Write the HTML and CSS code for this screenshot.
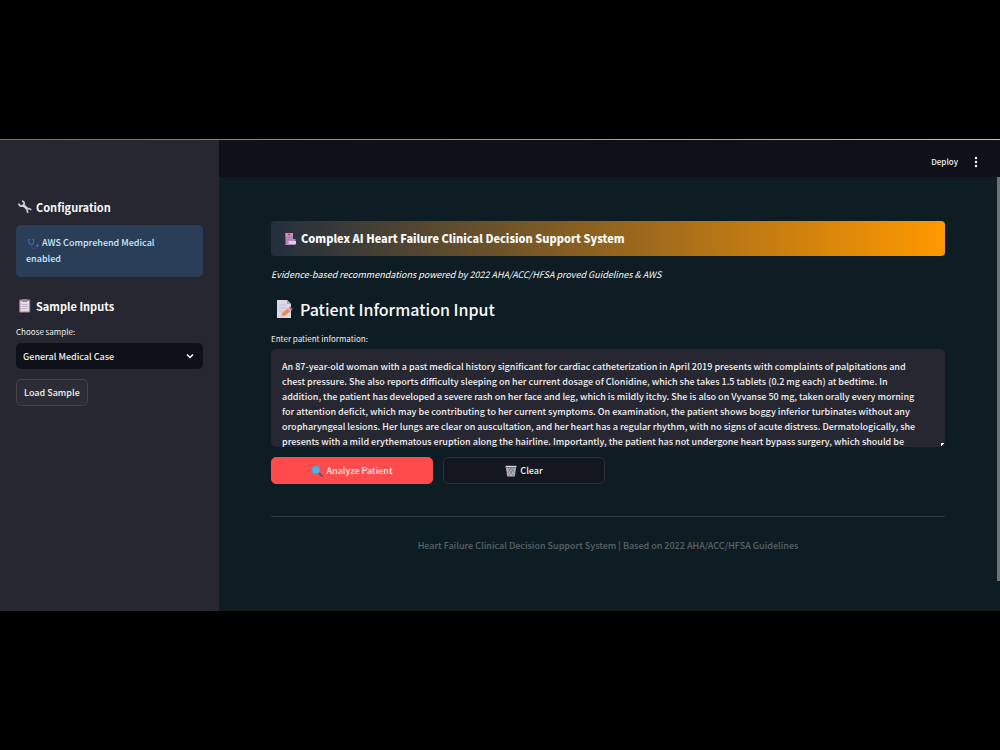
FILE: index.html
```html
<!DOCTYPE html>
<html lang="en">
<head>
    <meta charset="UTF-8">
    <meta name="viewport" content="width=device-width, initial-scale=1.0">
    <title>Heart Failure Clinical Decision Support System</title>
    <link rel="stylesheet" href="styles.css">
</head>
<body>
    <div class="app">
        <aside class="sidebar">
            <h2 class="side-title">
                <svg class="icon" viewBox="0 0 16 16" aria-hidden="true">
                    <path d="M6.500 5.500L12 10.500" stroke="#d0cfdd" stroke-width="2.600"/>
                    <path d="M6 2A2.600 2.600 0 1 1 3 4.600" fill="none" stroke="#d0cfdd" stroke-width="1.700"/>
                    <path d="M15 11.200A2 2 0 1 0 12.400 13.600" fill="none" stroke="#c2c0d0" stroke-width="1.700"/>
                </svg>
                Configuration
            </h2>
            <div class="notice">
                <svg class="icon-small" viewBox="0 0 14 14" aria-hidden="true">
                    <path d="M4 2.500H2.800v2.500a2.400 2.400 0 0 0 4.800 0V2.500H6.500" fill="none" stroke="#4669a8" stroke-width="1.100"/>
                    <path d="M5.200 7.500v2a2.600 2.600 0 0 0 5 0.500" fill="none" stroke="#51398f" stroke-width="1.400"/>
                    <circle cx="11.500" cy="8.500" r="1.200" fill="#5468d6"/>
                </svg>
                AWS Comprehend Medical enabled
            </div>

            <h2 class="side-title">
                <svg class="icon" viewBox="0 0 16 16" aria-hidden="true">
                    <rect x="3.200" y="1.500" width="11" height="13" rx="1" fill="#b9806c"/>
                    <rect x="4.400" y="3" width="8.600" height="10.500" fill="#ded9ec"/>
                    <rect x="6.200" y="1" width="5" height="3" rx="1" fill="#8f88a5"/>
                    <path d="M5.700 6.500h6M5.700 8.500h6M5.700 10.500h5" stroke="#b6aec9" stroke-width="0.800"/>
                </svg>
                Sample Inputs
            </h2>
            <label class="label" for="sample">Choose sample:</label>
            <div class="select-box">
                <select id="sample">
                    <option>General Medical Case</option>
                </select>
                <svg class="chevron" viewBox="0 0 10 10" aria-hidden="true">
                    <path d="M2 3.500L5 6.500L8 3.500" fill="none" stroke="#fafafa" stroke-width="1.500"/>
                </svg>
            </div>
            <button type="button" class="btn btn-load">Load Sample</button>
        </aside>

        <div class="page">
            <header class="toolbar">
                <button type="button" class="tool-btn">Deploy</button>
                <button type="button" class="tool-btn" aria-label="Menu">
                    <svg class="dots" viewBox="0 0 4 12" aria-hidden="true">
                        <circle cx="2" cy="2" r="1.200" fill="#fafafa"/>
                        <circle cx="2" cy="6" r="1.200" fill="#fafafa"/>
                        <circle cx="2" cy="10" r="1.200" fill="#fafafa"/>
                    </svg>
                </button>
            </header>

            <main class="content">
                <h1 class="banner">
                    <svg class="icon-small" viewBox="0 0 14 14" aria-hidden="true">
                        <path d="M1.500 1h7.500v6h2.500v6h-10z" fill="#b58abf"/>
                        <path d="M1.500 1h7.500v3h-7.500z" fill="#d78caf"/>
                        <path d="M5.200 1.300v2.400M4 2.500h2.400" stroke="#d63f72" stroke-width="1"/>
                        <path d="M3 5.500h4.500M3 7.500h3" stroke="#9c7db5" stroke-width="1"/>
                        <path d="M4.500 9h7.500v3h-7.500z" fill="#e0c8f2"/>
                    </svg>
                    Complex AI Heart Failure Clinical Decision Support System
                </h1>
                <p class="tagline">Evidence-based recommendations powered by 2022 AHA/ACC/HFSA proved Guidelines &amp; AWS</p>

                <h2 class="section-title">
                    <svg class="icon-large" viewBox="0 0 20 20" aria-hidden="true">
                        <path d="M1 1h10l4 4v14H1z" fill="#ddd8e8"/>
                        <path d="M11 1v4h4z" fill="#aaa3bb"/>
                        <path d="M3.500 6h7M3.500 9h8M3.500 12h5" stroke="#c6c0d3" stroke-width="0.900"/>
                        <path d="M6.500 16L13 11" stroke="#f08a4b" stroke-width="3.600"/>
                        <path d="M13 11l1.500-1.200" stroke="#c9bccb" stroke-width="3.600"/>
                        <path d="M14.300 10l1.400-1.100" stroke="#dc4c58" stroke-width="3.600"/>
                        <path d="M4.500 18l1-3.500 2.200 2.800z" fill="#efbd91"/>
                    </svg>
                    Patient Information Input
                </h2>
                <label class="label" for="patient">Enter patient information:</label>
                <div class="text-box">
                    <textarea id="patient">An 87-year-old woman with a past medical history significant for cardiac catheterization in April 2019 presents with complaints of palpitations and
chest pressure. She also reports difficulty sleeping on her current dosage of Clonidine, which she takes 1.5 tablets (0.2 mg each) at bedtime. In
addition, the patient has developed a severe rash on her face and leg, which is mildly itchy. She is also on Vyvanse 50 mg, taken orally every morning
for attention deficit, which may be contributing to her current symptoms. On examination, the patient shows boggy inferior turbinates without any
oropharyngeal lesions. Her lungs are clear on auscultation, and her heart has a regular rhythm, with no signs of acute distress. Dermatologically, she
presents with a mild erythematous eruption along the hairline. Importantly, the patient has not undergone heart bypass surgery, which should be</textarea>
                </div>

                <div class="actions">
                    <button type="button" class="btn btn-primary">
                        <svg class="icon-btn" viewBox="0 0 12 12" aria-hidden="true">
                            <path d="M7.500 7.500L11 11" stroke="#5d4d78" stroke-width="2" stroke-linecap="round"/>
                            <circle cx="5" cy="5" r="4" fill="#48b5e8" stroke="#6b8fb5" stroke-width="1"/>
                        </svg>
                        Analyze Patient
                    </button>
                    <button type="button" class="btn btn-clear">
                        <svg class="icon-btn" viewBox="0 0 12 12" aria-hidden="true">
                            <path d="M0.500 0.800h11v1.700H0.500z" fill="#d9d7e0"/>
                            <path d="M1 3h10L9.800 11.500H2.200z" fill="#b3b1bd"/>
                            <path d="M3 3l5.500 8M6 3l3.500 5M9 3l-5.500 8M6 3L2.500 8" stroke="#5d5b69" stroke-width="0.600"/>
                        </svg>
                        Clear
                    </button>
                </div>

                <footer class="footer">Heart Failure Clinical Decision Support System | Based on 2022 AHA/ACC/HFSA Guidelines</footer>
            </main>
        </div>
    </div>
</body>
</html>
```

FILE: styles.css
```css
/* General Styling */
* {
    box-sizing: border-box;
}
body {
    margin: 0;
    min-height: 100vh;
    display: flex;
    flex-direction: column;
    justify-content: center;
    background: #000;
    color: #f0f0f2;
    font-family: "Noto Sans CJK SC", "Noto Sans", sans-serif;
    font-size: 9px;
    font-weight: 500;
    line-height: 15px;
}
button, select, textarea {
    font: inherit;
    color: inherit;
}
h1, h2, p {
    margin: 0;
    color: #fafafa;
}
svg {
    flex: none;
}
.app {
    display: flex;
    position: relative;
    padding-top: 1px;
}
/* Thin coloured line above the app */
.app::before {
    content: "";
    position: absolute;
    top: 0;
    left: 0;
    right: 0;
    height: 1px;
    background: linear-gradient(90deg, #b9564c, #b98f7a 50%, #c9c88a);
}

/* Sidebar */
.sidebar {
    flex: 0 0 219px;
    padding: 57px 16px 16px;
    background: #262730;
}
.side-title {
    display: flex;
    align-items: center;
    gap: 4px;
    font-size: 11px;
    line-height: 20px;
    font-weight: 700;
}
.icon {
    width: 16px;
    height: 16px;
}
.notice {
    margin: 8px 0 19px;
    padding: 10px 24px 10px 10px;
    border-radius: 5px;
    background: #2a3e58;
    color: #c7ebff;
    line-height: 16px;
}
.icon-small {
    width: 14px;
    height: 14px;
    vertical-align: middle;
}
.label {
    display: block;
    font-size: 8px;
    font-weight: 400;
    line-height: 12px;
}
.sidebar .label {
    margin: 10px 0 5px;
}
.select-box {
    position: relative;
}
.select-box select {
    width: 100%;
    height: 26px;
    padding: 0 7px;
    border: none;
    border-radius: 5px;
    background: #0e1117;
    appearance: none;
}
.chevron {
    position: absolute;
    top: 8px;
    right: 8px;
    width: 10px;
    height: 10px;
    pointer-events: none;
}

/* Buttons */
.btn {
    display: flex;
    align-items: center;
    justify-content: center;
    gap: 3px;
    height: 27px;
    padding: 0 7px;
    border: 1px solid #41444c;
    border-radius: 5px;
    background: #2b2c36;
    cursor: pointer;
}
.btn-load {
    margin-top: 10px;
}
.btn-primary {
    background: #ff4b4b;
    border-color: #ff4b4b;
}
.btn-clear {
    background: #131720;
    border-color: #2c333b;
}
.icon-btn {
    width: 12px;
    height: 12px;
}

/* Page */
.page {
    flex: 1;
    min-width: 0;
    background: #0d1d23;
}
.toolbar {
    display: flex;
    justify-content: flex-end;
    align-items: center;
    gap: 16px;
    height: 37px;
    padding: 6px 22px 0 0;
    background: #0e1117;
}
.tool-btn {
    padding: 0;
    border: none;
    background: none;
    font-size: 8px;
    cursor: pointer;
}
.dots {
    display: block;
    width: 4px;
    height: 12px;
}
.content {
    position: relative;
    padding: 44px 55px 58px 52px;
}
/* Scroll thumb */
.content::after {
    content: "";
    position: absolute;
    top: 0;
    right: 0;
    bottom: 30px;
    width: 3px;
    background: #6b7275;
}
.banner {
    display: flex;
    align-items: center;
    gap: 3px;
    padding: 8px 13px;
    border-radius: 4px;
    background: linear-gradient(90deg, #232f3e, #ff9900);
    font-size: 11px;
    line-height: 19px;
    font-weight: 900;
}
.tagline {
    margin-top: 11px;
    font-weight: 400;
    font-style: italic;
}
.section-title {
    display: flex;
    align-items: center;
    gap: 4px;
    margin: 14px 0 11px;
    padding-left: 5px;
    font-size: 16px;
    line-height: 26px;
    font-weight: 500;
}
.icon-large {
    width: 20px;
    height: 20px;
}
.text-box {
    margin-top: 4px;
}
.text-box textarea {
    display: block;
    width: 100%;
    height: 98px;
    padding: 10px 11px 0;
    border: none;
    border-radius: 5px;
    background: #262730;
    resize: vertical;
    overflow: hidden;
}
/* Corner grip of the text box */
.text-box textarea::-webkit-resizer {
    background: linear-gradient(135deg, #fafafa 50%, transparent 50%) 11px 11px / 4px 4px no-repeat;
}
.actions {
    display: grid;
    grid-template-columns: 162px 162px;
    gap: 10px;
    margin-top: 10px;
}
.footer {
    margin-top: 32px;
    padding-top: 21px;
    border-top: 1px solid #2d3a40;
    color: #5b6467;
    text-align: center;
}
```
